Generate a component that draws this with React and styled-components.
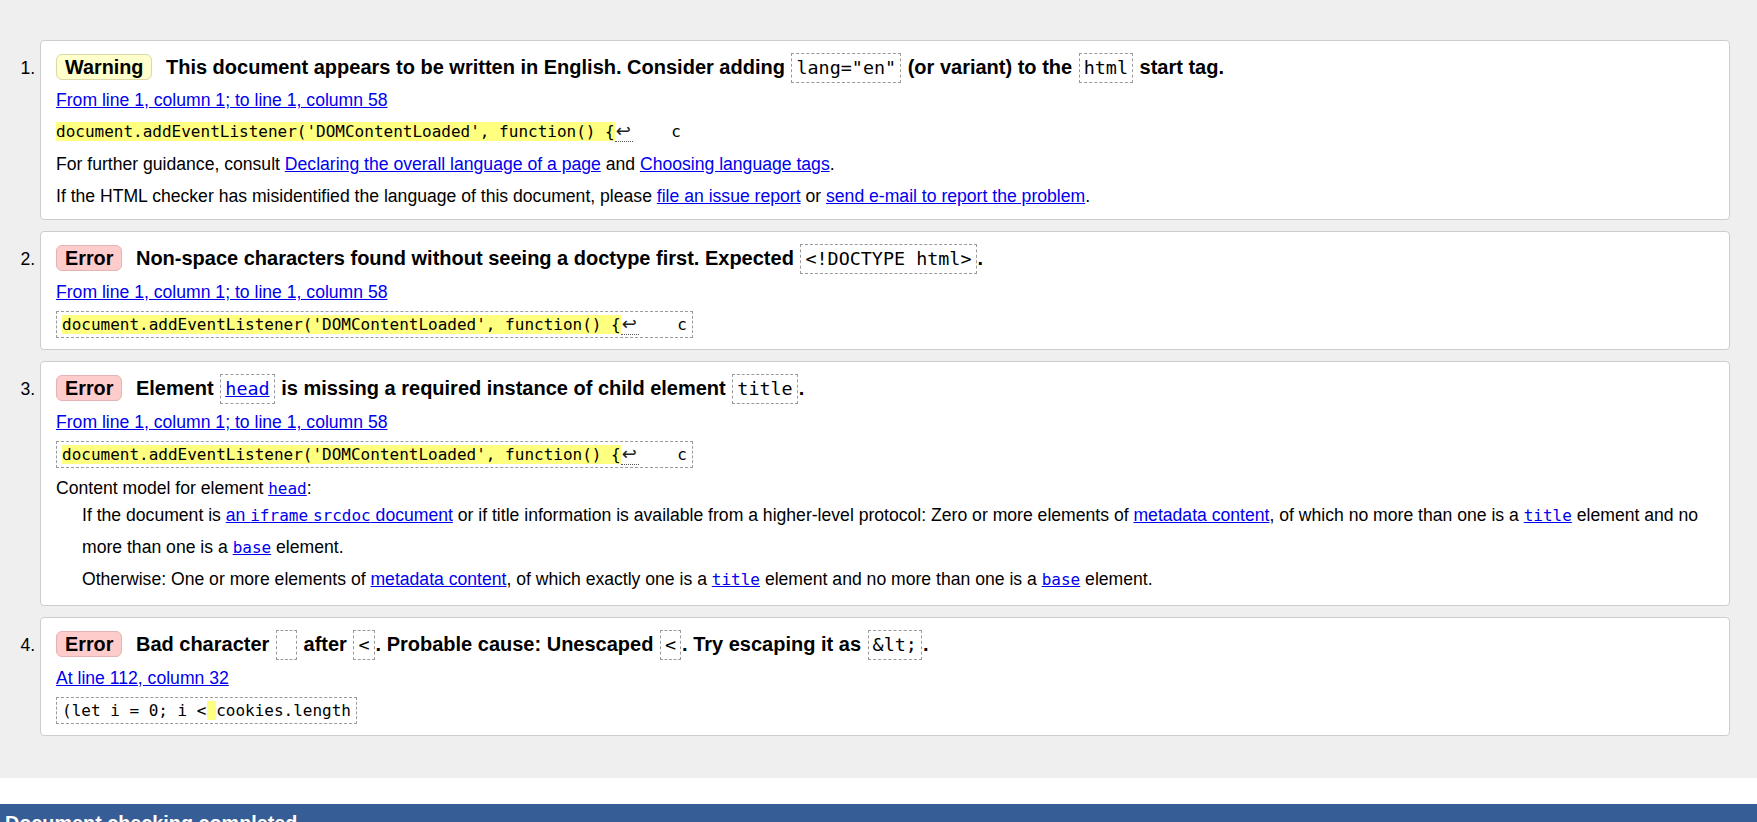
import React from 'react'
import styled, { createGlobalStyle, css } from 'styled-components'

const GlobalStyle = createGlobalStyle`
  html, body {
    overflow: hidden;
  }

  body {
    margin: 0;
    background: #fff;
    color: #000;
    font-family: "Liberation Sans", Arial, sans-serif;
    font-size: 17.6px;
  }
`

const MONO = '"DejaVu Sans Mono", "Liberation Mono", monospace'

const badgeColors = {
  warning: { bg: '#ffffcc', border: '#dcd9a8' },
  error: { bg: '#ffcccc', border: '#e3b4b4' },
}

const Results = styled.div`
  background: #efefef;
  padding: 40px 27px 42px 0;
`

const MessageList = styled.ol`
  margin: 0;
  padding: 0 0 0 40px;
`

const MessageItem = styled.li`
  background: #fff;
  border: 1px solid #cdcdcd;
  border-radius: 4px;
  padding: 9px 15px 7px;
  margin-bottom: 11px;

  &:last-child {
    margin-bottom: 0;
  }
`

const Title = styled.p`
  margin: 0;
  line-height: 34px;
  font-size: 20px;
  font-weight: bold;
`

const Badge = styled.strong`
  display: inline-block;
  font-size: 19.8px;
  line-height: 24px;
  padding: 0 8px;
  margin-right: 8px;
  border-radius: 6px;
  border: 1px solid ${props => badgeColors[props.$type].border};
  background: ${props => badgeColors[props.$type].bg};
`

const TitleCode = styled.code`
  display: inline-block;
  font-family: ${MONO};
  font-size: 18.4px;
  font-weight: normal;
  line-height: 22px;
  white-space: pre;
  padding: 3px 4px;
  margin: 0 1px;
  border: 1px dashed #9a9a9a;
`

const Link = styled.a`
  color: #0000ee;
  text-decoration: underline;
`

const Text = styled.p`
  margin: 0;
  line-height: 32px;
`

const Location = styled(Text)`
  margin-top: ${props => (props.$boxed ? '1px' : '0')};
`

const Extract = styled.p`
  margin: 0;
  line-height: 32px;
  font-family: ${MONO};
  font-size: 16px;
  white-space: pre;

  ${props => props.$boxed && css`
    width: fit-content;
    margin: 3px 0 4px;
    padding: 0 5px;
    line-height: 25px;
    border: 1px dashed #9a9a9a;
  `}
`

const Mark = styled.mark`
  background: #ffff80;
  color: inherit;
`

const Newline = styled.span`
  padding: 0 2px 0 1px;
  font-family: "DejaVu Sans", sans-serif;
  font-size: 18px;
  line-height: 1;
  color: #222;
  border-bottom: 1px dotted #555;
`

const InlineCode = styled.code`
  font-family: ${MONO};
  font-size: 16px;
  line-height: 1;
`

const Definition = styled.div`
  margin: -5px 0 3px 26px;
`

const StatusBar = styled.div`
  margin-top: 26px;
  padding: 8px 5px;
  background: #365d95;
  color: #fff;
  font-size: 19.8px;
  font-weight: bold;
`

const domExtract = (
  <>
    <Mark>document.addEventListener('DOMContentLoaded', function() {'{'}</Mark>
    <Newline>↩</Newline>
    {'    c'}
  </>
)

const Message = ({ type, title, location, extract, boxed, children }) => (
  <MessageItem>
    <Title>
      <Badge $type={type}>{type === 'warning' ? 'Warning' : 'Error'}</Badge>{' '}
      <span>{title}</span>
    </Title>
    <Location $boxed={boxed}>
      <Link href="#">{location}</Link>
    </Location>
    <Extract $boxed={boxed}>{extract}</Extract>
    {children}
  </MessageItem>
)

const FROM_LINE = 'From line 1, column 1; to line 1, column 58'

const App = () => (
  <>
    <GlobalStyle />
    <Results>
      <MessageList>
        <Message
          type="warning"
          location={FROM_LINE}
          extract={domExtract}
          title={
            <>
              This document appears to be written in English. Consider adding{' '}
              <TitleCode>lang="en"</TitleCode> (or variant) to the{' '}
              <TitleCode>html</TitleCode> start tag.
            </>
          }
        >
          <Text>
            For further guidance, consult{' '}
            <Link href="#">Declaring the overall language of a page</Link> and{' '}
            <Link href="#">Choosing language tags</Link>.
          </Text>
          <Text>
            If the HTML checker has misidentified the language of this document, please{' '}
            <Link href="#">file an issue report</Link> or{' '}
            <Link href="#">send e-mail to report the problem</Link>.
          </Text>
        </Message>

        <Message
          type="error"
          boxed
          location={FROM_LINE}
          extract={domExtract}
          title={
            <>
              Non-space characters found without seeing a doctype first. Expected{' '}
              <TitleCode>&lt;!DOCTYPE html&gt;</TitleCode>.
            </>
          }
        />

        <Message
          type="error"
          boxed
          location={FROM_LINE}
          extract={domExtract}
          title={
            <>
              Element{' '}
              <TitleCode>
                <Link href="#">head</Link>
              </TitleCode>{' '}
              is missing a required instance of child element <TitleCode>title</TitleCode>.
            </>
          }
        >
          <Text>
            Content model for element{' '}
            <Link href="#">
              <InlineCode>head</InlineCode>
            </Link>
            :
          </Text>
          <Definition>
            <Text>
              If the document is{' '}
              <Link href="#">
                an <InlineCode>iframe</InlineCode> <InlineCode>srcdoc</InlineCode> document
              </Link>{' '}
              or if title information is available from a higher-level protocol: Zero or more
              elements of <Link href="#">metadata content</Link>, of which no more than one is a{' '}
              <Link href="#">
                <InlineCode>title</InlineCode>
              </Link>{' '}
              element and no more than one is a{' '}
              <Link href="#">
                <InlineCode>base</InlineCode>
              </Link>{' '}
              element.
            </Text>
            <Text>
              Otherwise: One or more elements of <Link href="#">metadata content</Link>, of which
              exactly one is a{' '}
              <Link href="#">
                <InlineCode>title</InlineCode>
              </Link>{' '}
              element and no more than one is a{' '}
              <Link href="#">
                <InlineCode>base</InlineCode>
              </Link>{' '}
              element.
            </Text>
          </Definition>
        </Message>

        <Message
          type="error"
          boxed
          location="At line 112, column 32"
          extract={
            <>
              {'(let i = 0; i <'}
              <Mark> </Mark>
              cookies.length
            </>
          }
          title={
            <>
              Bad character <TitleCode> </TitleCode> after <TitleCode>&lt;</TitleCode>. Probable
              cause: Unescaped <TitleCode>&lt;</TitleCode>. Try escaping it as{' '}
              <TitleCode>&amp;lt;</TitleCode>.
            </>
          }
        />
      </MessageList>
    </Results>
    <StatusBar>Document checking completed.</StatusBar>
  </>
)

export default App
